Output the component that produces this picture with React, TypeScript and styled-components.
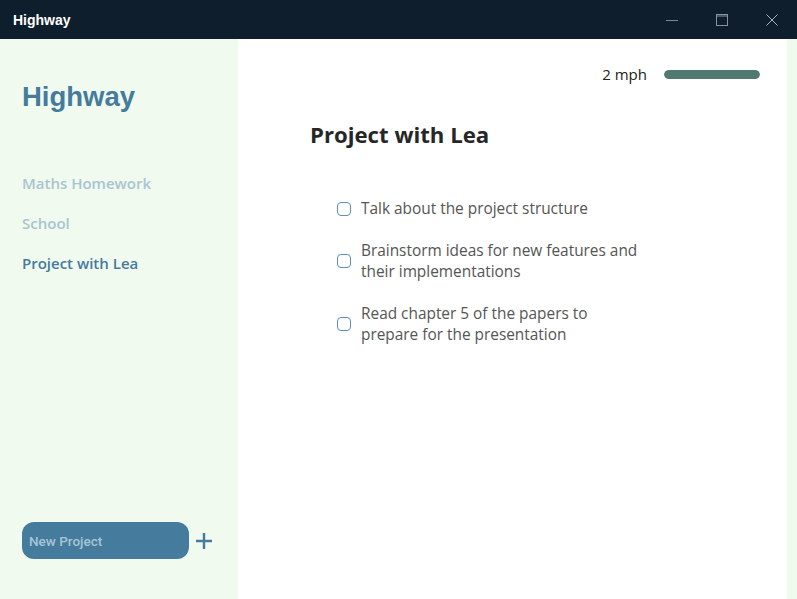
import styled, { createGlobalStyle } from "styled-components";

const GlobalStyle = createGlobalStyle`
  html, body {
    margin: 0;
    padding: 0;
    height: 100%;
  }
  #root {
    height: 100%;
  }
  * {
    box-sizing: border-box;
  }
`;

const Window = styled.div`
  display: flex;
  flex-direction: column;
  width: 797px;
  height: 599px;
  overflow: hidden;
  background: #f1faee;
`;

const TitleBar = styled.div`
  display: flex;
  align-items: center;
  height: 39px;
  flex-shrink: 0;
  background: #0f1e2d;
  padding-left: 13px;
`;

const TitleText = styled.div`
  flex: 1;
  color: #ffffff;
  font-family: "Liberation Sans", Arial, sans-serif;
  font-weight: 700;
  font-size: 14px;
`;

const WindowButton = styled.div`
  display: flex;
  align-items: center;
  justify-content: center;
  width: 50px;
  height: 39px;
`;

const Body = styled.div`
  flex: 1;
  display: flex;
  min-height: 0;
`;

const Sidebar = styled.aside`
  width: 238px;
  flex-shrink: 0;
  display: flex;
  flex-direction: column;
  padding: 43px 0 40px 22px;
  background: #f1faee;
`;

const Brand = styled.h1`
  margin: 0;
  color: #457b9d;
  font-family: "Liberation Sans", Arial, sans-serif;
  font-weight: 700;
  font-size: 27.5px;
  line-height: 30px;
`;

const Nav = styled.nav`
  display: flex;
  flex-direction: column;
  gap: 18px;
  margin-top: 60px;
`;

const NavItem = styled.a<{ $active?: boolean }>`
  display: block;
  font-family: "Open Sans", "Noto Sans", sans-serif;
  font-weight: 600;
  font-size: 15px;
  line-height: 22px;
  color: ${(p) => (p.$active ? "#457b9d" : "#a8c5d1")};
  cursor: pointer;
`;

const SidebarFooter = styled.div`
  margin-top: auto;
  display: flex;
  align-items: center;
  gap: 6px;
`;

const NewProjectButton = styled.button`
  width: 167px;
  height: 37px;
  border: none;
  border-radius: 12px;
  background: #457b9d;
  color: #a8c5d6;
  text-align: left;
  padding: 0 7px;
  font-family: "Roboto", "Liberation Sans", sans-serif;
  font-size: 13.5px;
  font-weight: 500;
`;

const PlusButton = styled.div`
  display: flex;
  align-items: center;
  justify-content: center;
  width: 18px;
  height: 18px;
`;

const Main = styled.main`
  flex: 1;
  display: flex;
  flex-direction: column;
  background: #ffffff;
  padding: 27px 27px 0 72px;
`;

const SpeedRow = styled.div`
  display: flex;
  align-items: center;
  justify-content: flex-end;
  gap: 17px;
  height: 16px;
`;

const SpeedLabel = styled.span`
  font-family: "Open Sans", "Noto Sans", sans-serif;
  font-size: 15px;
  color: #222222;
`;

const SpeedTrack = styled.div`
  width: 96px;
  height: 9px;
  border-radius: 5px;
  background: #e6ece9;
  overflow: hidden;
`;

const SpeedFill = styled.div`
  height: 100%;
  border-radius: 5px;
  background: #52796f;
`;

const Heading = styled.h2`
  margin: 38px 0 0;
  font-family: "Open Sans", "Noto Sans", sans-serif;
  font-weight: 700;
  font-size: 22.2px;
  line-height: 30px;
  color: #262626;
`;

const TaskList = styled.ul`
  list-style: none;
  margin: 48px 0 0;
  padding: 0 0 0 27px;
  display: flex;
  flex-direction: column;
  gap: 21px;
`;

const Task = styled.li`
  display: flex;
  align-items: center;
  gap: 10px;
`;

const Box = styled.span`
  width: 14px;
  height: 14px;
  flex-shrink: 0;
  border: 1px solid #5f8fb0;
  border-radius: 4px;
  background: #ffffff;
`;

const TaskText = styled.span`
  max-width: 282px;
  font-family: "Open Sans", "Noto Sans", sans-serif;
  font-size: 15.4px;
  line-height: 21px;
  color: #555555;
`;

const RightEdge = styled.div`
  width: 10px;
  flex-shrink: 0;
  background: #f1faee;
`;

const tasks = [
  "Talk about the project structure",
  "Brainstorm ideas for new features and their implementations",
  "Read chapter 5 of the papers to prepare for the presentation",
];

const projects = ["Maths Homework", "School", "Project with Lea"];

export default function App() {
  const speed = 1;
  return (
    <>
      <GlobalStyle />
      <Window>
        <TitleBar>
          <TitleText>Highway</TitleText>
          <WindowButton>
            <svg width="12" height="12" viewBox="0 0 12 12">
              <line x1="0" y1="6.5" x2="12" y2="6.5" stroke="#7e8791" strokeWidth="1" />
            </svg>
          </WindowButton>
          <WindowButton>
            <svg width="12" height="12" viewBox="0 0 12 12">
              <rect x="0.5" y="0.5" width="11" height="11" fill="none" stroke="#8a939c" strokeWidth="1" />
              <line x1="0" y1="2" x2="12" y2="2" stroke="#8a939c" strokeWidth="1" />
            </svg>
          </WindowButton>
          <WindowButton>
            <svg width="12" height="12" viewBox="0 0 12 12">
              <path d="M0.5 0.5 L11.5 11.5 M11.5 0.5 L0.5 11.5" stroke="#aab1b8" strokeWidth="1" />
            </svg>
          </WindowButton>
        </TitleBar>
        <Body>
          <Sidebar>
            <Brand>Highway</Brand>
            <Nav>
              {projects.map((p) => (
                <NavItem key={p} $active={p === "Project with Lea"}>
                  {p}
                </NavItem>
              ))}
            </Nav>
            <SidebarFooter>
              <NewProjectButton>New Project</NewProjectButton>
              <PlusButton>
                <svg width="16" height="16" viewBox="0 0 16 16">
                  <path d="M8 0 V16 M0 8 H16" stroke="#457b9d" strokeWidth="2.4" />
                </svg>
              </PlusButton>
            </SidebarFooter>
          </Sidebar>
          <Main>
            <SpeedRow>
              <SpeedLabel>2 mph</SpeedLabel>
              <SpeedTrack>
                <SpeedFill style={{ width: `${speed * 100}%` }} />
              </SpeedTrack>
            </SpeedRow>
            <Heading>Project with Lea</Heading>
            <TaskList>
              {tasks.map((t) => (
                <Task key={t}>
                  <Box />
                  <TaskText>{t}</TaskText>
                </Task>
              ))}
            </TaskList>
          </Main>
          <RightEdge />
        </Body>
      </Window>
    </>
  );
}
